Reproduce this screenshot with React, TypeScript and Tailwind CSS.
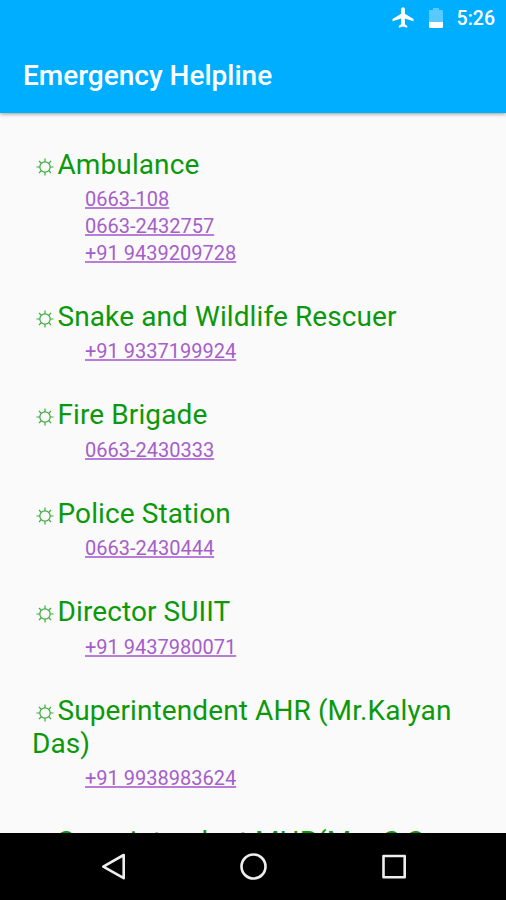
import React from "react";

interface HelplineEntry {
  title: string;
  numbers: string[];
}

const helplines: HelplineEntry[] = [
  {
    title: "Ambulance",
    numbers: ["0663-108", "0663-2432757", "+91 9439209728"],
  },
  { title: "Snake and Wildlife Rescuer", numbers: ["+91 9337199924"] },
  { title: "Fire Brigade", numbers: ["0663-2430333"] },
  { title: "Police Station", numbers: ["0663-2430444"] },
  { title: "Director SUIIT", numbers: ["+91 9437980071"] },
  {
    title: "Superintendent AHR (Mr.Kalyan Das)",
    numbers: ["+91 9938983624"],
  },
  { title: "Superintendent MHR(Mrs.S.S", numbers: [] },
];

const SunIcon = () => (
  <svg
    viewBox="0 0 18 18"
    className="ml-[3.5px] mr-[4px] inline-block size-[18px] align-[-2px]"
    fill="none"
    stroke="currentColor"
    strokeWidth="1.2"
    opacity="0.8"
  >
    <circle cx="9" cy="9" r="5.2" />
    <path d="M9 3.8V.5M9 14.2v3.3M3.8 9H.5M14.2 9h3.3M5.3 5.3 3 3M12.7 5.3 15 3M5.3 12.7 3 15M12.7 12.7 15 15" />
  </svg>
);

const StatusBar = () => (
  <div className="flex h-[37px] items-center justify-end pr-[11px] text-white">
    <svg viewBox="0 0 22 22" className="mr-[15px] mb-[1px] size-[22px]" fill="currentColor">
      <path d="M21.5 14.2v-2.1L12.9 6.8V2.1C12.9 1.1 12 .3 11 .3S9.1 1.1 9.1 2.1v4.7L.5 12.1v2.1l8.6-2.6v5.6l-2.3 1.8v1.7l4.2-1.2 4.2 1.2V19l-2.3-1.8v-5.6z" />
    </svg>
    <svg viewBox="0 0 14 20" className="mr-[14px] mb-[2px] h-[20px] w-[14px]" fill="currentColor">
      <path
        opacity="0.35"
        d="M1.2 2H4V0h6v2h2.8C13.5 2 14 2.5 14 3.2V14H0V3.2C0 2.5.5 2 1.2 2z"
      />
      <path d="M0 14h14v4.8c0 .7-.5 1.2-1.2 1.2H1.2C.5 20 0 19.5 0 18.8z" />
    </svg>
    <span className="text-[19.5px] font-medium leading-none">5:26</span>
  </div>
);

const Helpline = ({ title, numbers }: HelplineEntry) => (
  <section className="pb-[33.5px]">
    <h2 className="text-[28px] leading-[33px] tracking-[0.1px] text-[#0b990b]">
      <SunIcon />
      {title}
    </h2>
    <ul className="pl-[53px] pt-[5.4px]">
      {numbers.map((number) => (
        <li key={number} className="h-[26.6px] text-[20px] leading-[26.6px]">
          <a className="text-[#a65ecb] underline decoration-[#b87dd6] decoration-[1.5px] underline-offset-[1px] [text-decoration-skip-ink:none]">
            {number}
          </a>
        </li>
      ))}
    </ul>
  </section>
);

const NavigationBar = () => (
  <nav className="flex h-[67px] shrink-0 items-center justify-center gap-[112px] bg-black pl-px">
    <svg viewBox="0 0 28 28" className="size-[28px]" fill="none" stroke="#eee" strokeWidth="2.6" strokeLinejoin="round">
      <path d="M23.7 2v23.2L3.3 13.6z" />
    </svg>
    <svg viewBox="0 0 28 28" className="size-[28px]" fill="none" stroke="#eee" strokeWidth="2.6">
      <circle cx="13.5" cy="13.5" r="12" />
    </svg>
    <svg viewBox="0 0 28 28" className="size-[28px]" fill="none" stroke="#eee" strokeWidth="2.6" strokeLinejoin="round">
      <path d="M3.5 3h21.2v21.2H3.5z" />
    </svg>
  </nav>
);

const App = () => (
  <div className="flex h-[900px] w-[506px] flex-col overflow-hidden bg-[#fafafa] font-[Roboto,sans-serif]">
    <header className="z-10 h-[113px] shrink-0 bg-[#00aeff] shadow-[0_1px_4px_rgba(0,0,0,0.4)]">
      <StatusBar />
      <h1 className="pl-[23px] pt-[23px] text-[28px] font-medium leading-[32px] text-white">
        Emergency Helpline
      </h1>
    </header>
    <main className="min-h-0 flex-1 overflow-hidden pl-[32px] pr-[32px] pt-[35px]">
      {helplines.map((entry) => (
        <Helpline key={entry.title} {...entry} />
      ))}
    </main>
    <NavigationBar />
  </div>
);

export default App;
